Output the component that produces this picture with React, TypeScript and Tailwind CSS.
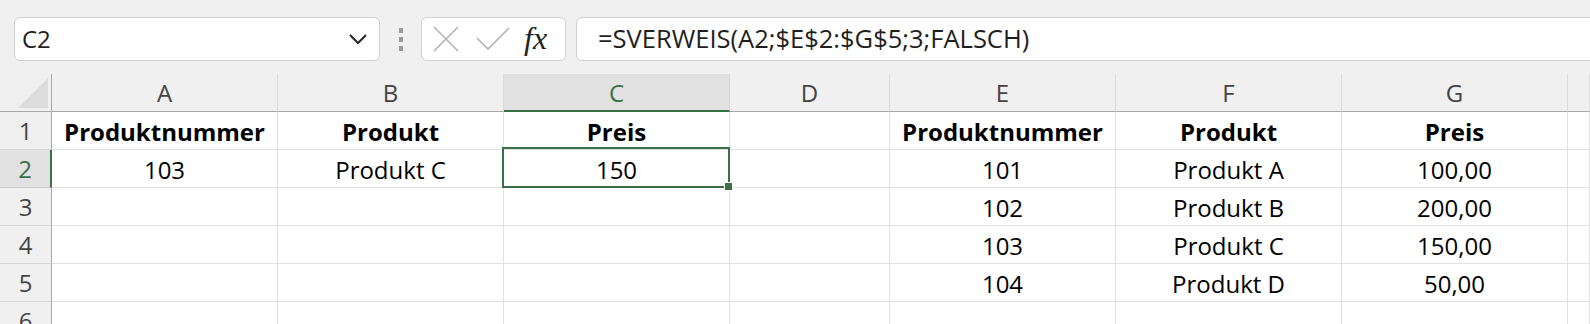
import React from "react";

const rows: { bold?: boolean; cells: string[] }[] = [
  { bold: true, cells: ["Produktnummer", "Produkt", "Preis", "", "Produktnummer", "Produkt", "Preis", ""] },
  { cells: ["103", "Produkt C", "150", "", "101", "Produkt A", "100,00", ""] },
  { cells: ["", "", "", "", "102", "Produkt B", "200,00", ""] },
  { cells: ["", "", "", "", "103", "Produkt C", "150,00", ""] },
  { cells: ["", "", "", "", "104", "Produkt D", "50,00", ""] },
  { cells: ["", "", "", "", "", "", "", ""] },
];

const letters = ["A", "B", "C", "D", "E", "F", "G", ""];

export default function App() {
  return (
    <div
      className="w-[1590px] h-[324px] overflow-hidden bg-[#f0f0f0] text-black"
      style={{ fontFamily: '"Open Sans", "Noto Sans", sans-serif' }}
    >
      {/* Formula bar */}
      <div className="h-[74px] flex items-start pt-[17px] pl-[14px]">
        <div className="w-[366px] h-[44px] bg-white border border-[#cfcfcf] rounded-[6px] flex items-center pl-[7px] pr-[10px]">
          <span className="text-[24px] text-[#1f1f1f] flex-1 leading-none">C2</span>
          <svg width="20" height="12" viewBox="0 0 20 12" className="mr-[1px]">
            <path d="M2 2 L10 10 L18 2" fill="none" stroke="#262626" strokeWidth="2" />
          </svg>
        </div>
        <div className="w-[41px] h-[44px] flex flex-col items-center justify-center gap-[4px]">
          <div className="w-[4px] h-[5px] bg-[#9b9b9b]" />
          <div className="w-[4px] h-[5px] bg-[#9b9b9b]" />
          <div className="w-[4px] h-[5px] bg-[#9b9b9b]" />
        </div>
        <div className="w-[145px] h-[44px] bg-white border border-[#cfcfcf] rounded-[6px] flex items-center pl-[11px]">
          <svg width="26" height="26" viewBox="0 0 26 26">
            <path d="M1 1 L25 25 M25 1 L1 25" stroke="#b4b4b4" strokeWidth="1.6" fill="none" />
          </svg>
          <svg width="34" height="24" viewBox="0 0 34 24" className="ml-[17px]">
            <path d="M1 11 L12 22 L33 1" stroke="#b4b4b4" strokeWidth="1.6" fill="none" />
          </svg>
          <span
            className="ml-[14px] italic text-[32px] leading-none text-[#222] pb-[2px]"
            style={{ fontFamily: '"Liberation Serif", "DejaVu Serif", serif' }}
          >
            fx
          </span>
        </div>
        <div className="ml-[10px] flex-1 -mr-[20px] h-[44px] bg-white border border-[#cfcfcf] rounded-[6px] flex items-center pl-[21px]">
          <span className="text-[25.5px] leading-none text-[#1f1f1f] whitespace-nowrap">
            =SVERWEIS(A2;$E$2:$G$5;3;FALSCH)
          </span>
        </div>
      </div>

      {/* Grid */}
      <div className="grid grid-cols-[52px_226px_226px_226px_160px_226px_226px_226px_1fr]">
        <div className="h-[38px] bg-[#f0f0f0] border-r border-b border-[#a9a9a9] flex items-end justify-end pr-[3px] pb-[3px]">
          <svg width="30" height="30" viewBox="0 0 30 30">
            <path d="M30 0 L30 30 L0 30 Z" fill="#dcdcdc" />
          </svg>
        </div>
        {letters.map((l, i) =>
          l === "C" ? (
            <div
              key={i}
              className="h-[38px] bg-[#e1e1e1] border-r border-r-[#d6d6d6] border-b-2 border-b-[#3a7046] flex items-center justify-center text-[24px] text-[#3a7046] pt-[2px]"
            >
              {l}
            </div>
          ) : (
            <div
              key={i}
              className="h-[38px] bg-[#f0f0f0] border-r border-r-[#dcdcdc] border-b border-b-[#a9a9a9] flex items-center justify-center text-[24px] text-[#444]"
            >
              {l}
            </div>
          )
        )}

        {rows.map((r, ri) => (
          <React.Fragment key={ri}>
            {ri === 1 ? (
              <div className="h-[38px] bg-[#e1e1e1] border-r-2 border-r-[#3a7046] border-b border-b-[#c9c9c9] flex items-center justify-center text-[24px] text-[#3a7046]">
                {ri + 1}
              </div>
            ) : (
              <div className="h-[38px] bg-[#f0f0f0] border-r border-r-[#a9a9a9] border-b border-b-[#d8d8d8] flex items-center justify-center text-[24px] text-[#444]">
                {ri + 1}
              </div>
            )}
            {r.cells.map((c, ci) => (
              <div
                key={ci}
                className={
                  "h-[38px] bg-white border-r border-b border-[#e1e1e1] flex items-center justify-center text-[24px] pt-[2px] " +
                  (ri === 1 && ci === 2 ? "relative z-10 " : "") +
                  (r.bold ? "font-bold" : "")
                }
              >
                {c}
                {ri === 1 && ci === 2 && (
                  <div className="absolute -left-[2px] -top-[3px] -right-[1px] -bottom-[1px] border-[2.5px] border-[#3a7046] pointer-events-none">
                    <div className="absolute -right-[5px] -bottom-[5px] w-[9px] h-[9px] bg-[#3a7046] border border-white" />
                  </div>
                )}
              </div>
            ))}
          </React.Fragment>
        ))}
      </div>
    </div>
  );
}
